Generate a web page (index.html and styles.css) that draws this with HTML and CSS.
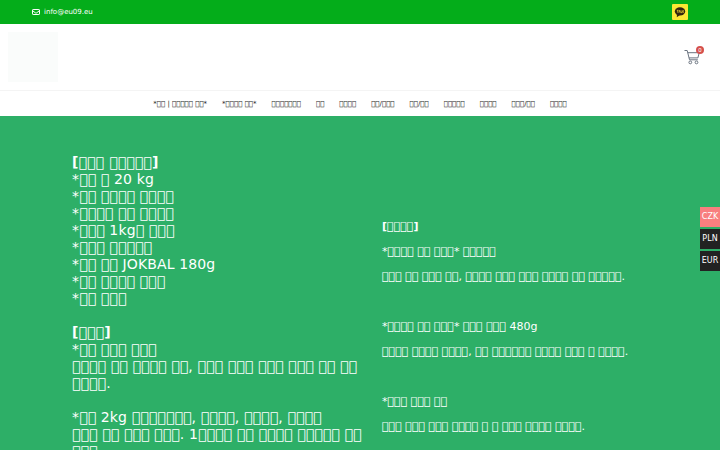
FILE: index.html
```html
<!DOCTYPE html>
<html lang="ko">
<head>
<meta charset="utf-8">
<meta name="viewport" content="width=device-width, initial-scale=1">
<title>EU09</title>
<link rel="stylesheet" href="styles.css">
</head>
<body>
<div class="topbar">
  <a class="mail" href="mailto:info@eu09.eu">
    <svg class="mail-icon" viewBox="0 0 16 12" aria-hidden="true"><rect x="1" y="1" width="14" height="10" rx="1.2"/><path d="M1 3.2 6.6 7.6Q8 8.600 9.400 7.600L15 3.200"/></svg>
    <span>info@eu09.eu</span>
  </a>
  <a class="talk" href="#talk" aria-label="Talk">
    <svg viewBox="0 0 16 16" aria-hidden="true"><ellipse cx="8" cy="7.400" rx="5.200" ry="4.200" fill="#32240f"/><path d="M5 10 4.800 13.200 8 11Z" fill="#32240f"/><path d="M4.800 6.300h1.800M5.700 6.300v2.400M6.900 8.700l.7-2.400.7 2.400M9 6.300v2.300h1M10.700 6.300v2.400M12 6.400l-1.200 1.100 1.200 1.200" fill="none" stroke="#f3dc35" stroke-width=".7"/></svg>
  </a>
</div>
<header class="header">
  <a class="logo" href="#home" aria-label="Home"></a>
  <a class="cart" href="#cart">
    <svg viewBox="0 0 16 16" aria-hidden="true"><path d="M.5 1.500h2.700l2.300 9.300h8.300M3.700 3.700h11.500l-1.300 5.200H5"/><circle cx="6.300" cy="13.400" r="1.400"/><circle cx="12.500" cy="13.400" r="1.400"/></svg>
    <span class="badge">0</span>
  </a>
</header>
<nav class="nav">
  <a href="#1">*&#xE000;&#xE000; | &#xE000;&#xE000;&#xE000;&#xE000;&#xE000; &#xE000;&#xE000;*</a>
  <a href="#2">*&#xE000;&#xE000;&#xE000;&#xE000; &#xE000;&#xE000;*</a>
  <a href="#3">&#xE000;&#xE000;&#xE000;&#xE000;&#xE000;&#xE000;&#xE000;</a>
  <a href="#4">&#xE000;&#xE000;</a>
  <a href="#5">&#xE000;&#xE000;&#xE000;&#xE000;</a>
  <a href="#6">&#xE000;&#xE000;/&#xE000;&#xE000;&#xE000;</a>
  <a href="#7">&#xE000;&#xE000;/&#xE000;&#xE000;</a>
  <a href="#8">&#xE000;&#xE000;&#xE000;&#xE000;&#xE000;</a>
  <a href="#9">&#xE000;&#xE000;&#xE000;&#xE000;</a>
  <a href="#10">&#xE000;&#xE000;&#xE000;/&#xE000;&#xE000;</a>
  <a href="#11">&#xE000;&#xE000;&#xE000;&#xE000;</a>
</nav>
<main class="hero">
  <section class="news">
    <p><b>[&#xE000;&#xE000;&#xE000; &#xE000;&#xE000;&#xE000;&#xE000;&#xE000;]</b><br>
    *&#xE000;&#xE000; &#xE000; 20 kg<br>
    *&#xE000;&#xE000; &#xE000;&#xE000;&#xE000;&#xE000; &#xE000;&#xE000;&#xE000;&#xE000;<br>
    *&#xE000;&#xE000;&#xE000;&#xE000; &#xE000;&#xE000; &#xE000;&#xE000;&#xE000;&#xE000;<br>
    *&#xE000;&#xE000;&#xE000; 1kg&#xE000; &#xE000;&#xE000;&#xE000;<br>
    *&#xE000;&#xE000;&#xE000; &#xE000;&#xE000;&#xE000;&#xE000;&#xE000;<br>
    *&#xE000;&#xE000; &#xE000;&#xE000; JOKBAL 180g<br>
    *&#xE000;&#xE000; &#xE000;&#xE000;&#xE000;&#xE000; &#xE000;&#xE000;&#xE000;<br>
    *&#xE000;&#xE000; &#xE000;&#xE000;&#xE000;</p>
    <p><b>[&#xE000;&#xE000;&#xE000;]</b><br>
    *&#xE000;&#xE000; &#xE000;&#xE000;&#xE000; &#xE000;&#xE000;&#xE000;<br>
    &#xE000;&#xE000;&#xE000;&#xE000; &#xE000;&#xE000; &#xE000;&#xE000;&#xE000;&#xE000; &#xE000;&#xE000;, &#xE000;&#xE000;&#xE000; &#xE000;&#xE000;&#xE000; &#xE000;&#xE000;&#xE000; &#xE000;&#xE000;&#xE000; &#xE000;&#xE000; &#xE000;&#xE000;<br>
    &#xE000;&#xE000;&#xE000;&#xE000;.</p>
    <p>*&#xE000;&#xE000; 2kg &#xE000;&#xE000;&#xE000;&#xE000;&#xE000;&#xE000;&#xE000;, &#xE000;&#xE000;&#xE000;&#xE000;, &#xE000;&#xE000;&#xE000;&#xE000;, &#xE000;&#xE000;&#xE000;&#xE000;<br>
    &#xE000;&#xE000;&#xE000; &#xE000;&#xE000; &#xE000;&#xE000;&#xE000; &#xE000;&#xE000;&#xE000;. 1&#xE000;&#xE000;&#xE000;&#xE000; &#xE000;&#xE000; &#xE000;&#xE000;&#xE000;&#xE000; &#xE000;&#xE000;&#xE000;&#xE000;&#xE000; &#xE000;&#xE000;<br>
    &#xE000;&#xE000;&#xE000;</p>
  </section>
  <section class="stock">
    <p><b>[&#xE000;&#xE000;&#xE000;&#xE000;]</b></p>
    <p>*&#xE000;&#xE000;&#xE000;&#xE000; &#xE000;&#xE000; &#xE000;&#xE000;&#xE000;* &#xE000;&#xE000;&#xE000;&#xE000;&#xE000;</p>
    <p class="detail">&#xE000;&#xE000;&#xE000; &#xE000;&#xE000; &#xE000;&#xE000;&#xE000; &#xE000;&#xE000;, &#xE000;&#xE000;&#xE000;&#xE000; &#xE000;&#xE000;&#xE000; &#xE000;&#xE000;&#xE000; &#xE000;&#xE000;&#xE000;&#xE000; &#xE000;&#xE000; &#xE000;&#xE000;&#xE000;&#xE000;&#xE000;.</p>
    <p>*&#xE000;&#xE000;&#xE000;&#xE000; &#xE000;&#xE000; &#xE000;&#xE000;&#xE000;* &#xE000;&#xE000;&#xE000; &#xE000;&#xE000;&#xE000; 480g</p>
    <p class="detail">&#xE000;&#xE000;&#xE000;&#xE000; &#xE000;&#xE000;&#xE000;&#xE000; &#xE000;&#xE000;&#xE000;&#xE000;, &#xE000;&#xE000; &#xE000;&#xE000;&#xE000;&#xE000;&#xE000;&#xE000; &#xE000;&#xE000;&#xE000;&#xE000; &#xE000;&#xE000;&#xE000; &#xE000; &#xE000;&#xE000;&#xE000;&#xE000;.</p>
    <p>*&#xE000;&#xE000;&#xE000; &#xE000;&#xE000;&#xE000; &#xE000;&#xE000;</p>
    <p class="detail">&#xE000;&#xE000;&#xE000; &#xE000;&#xE000;&#xE000; &#xE000;&#xE000;&#xE000; &#xE000;&#xE000;&#xE000;&#xE000; &#xE000; &#xE000; &#xE000;&#xE000;&#xE000; &#xE000;&#xE000;&#xE000;&#xE000; &#xE000;&#xE000;&#xE000;&#xE000;.</p>
  </section>
</main>
<div class="currency">
  <button class="active" type="button">CZK</button>
  <button type="button">PLN</button>
  <button type="button">EUR</button>
</div>
</body>
</html>
```

FILE: styles.css
```css
* { box-sizing: border-box; }
html { overflow: hidden; }
body { margin: 0; background: #fff; font-family: "DejaVu Sans", sans-serif; }
a { color: inherit; text-decoration: none; }
.topbar {
  display: flex; align-items: center; justify-content: space-between;
  height: 24px; padding: 0 32px; background: #04ad1a; color: #fff;
}
.mail { display: flex; align-items: center; gap: 4px; font-size: 7px; }
.mail-icon { width: 8px; height: 6px; fill: none; stroke: #fff; stroke-width: 2; }
.talk { width: 16px; height: 16px; border-radius: 1px; background: #fbe733; }
.talk svg { display: block; }
.header {
  display: flex; align-items: center; justify-content: space-between;
  height: 66px; padding: 0 20px 0 8px;
}
.logo { width: 50px; height: 50px; background: #fafcfb; }
.cart { position: relative; width: 16px; height: 16px; }
.cart svg { display: block; fill: none; stroke: #6b7480; stroke-width: 1; }
.badge {
  position: absolute; top: -3px; right: -4px; width: 8px; height: 8px;
  border-radius: 50%; background: #d5504c; color: #fff;
  font: 6px/8px Roboto, sans-serif; text-align: center;
}
.nav {
  display: flex; justify-content: center; align-items: center; gap: 15px;
  height: 26px; border-top: 1px solid #f4f4f4; color: #222;
  font-size: 7px;
}
.hero {
  display: grid; grid-template-columns: 310px 1fr; padding: 38px 72px 0;
  min-height: 334px; background: #2daf67; color: #fff;
}
.hero p { margin: 0; white-space: nowrap; }
.news { font-size: 14px; line-height: 17px; letter-spacing: 0.01em; }
.news p + p { margin-top: 17px; }
.stock { padding-top: 64px; font-size: 11px; line-height: 17px; }
.stock p + p { margin-top: 8px; }
.stock .detail + p { margin-top: 33px; }
.currency {
  position: absolute; top: 207px; right: 0;
  display: flex; flex-direction: column; gap: 2px;
}
.currency button {
  width: 20px; height: 20px; padding: 0; border: 0; background: #222; color: #fff;
  font-family: inherit; font-size: 8px; line-height: 20px;
}
.currency .active { background: #f87f7f; }
```
